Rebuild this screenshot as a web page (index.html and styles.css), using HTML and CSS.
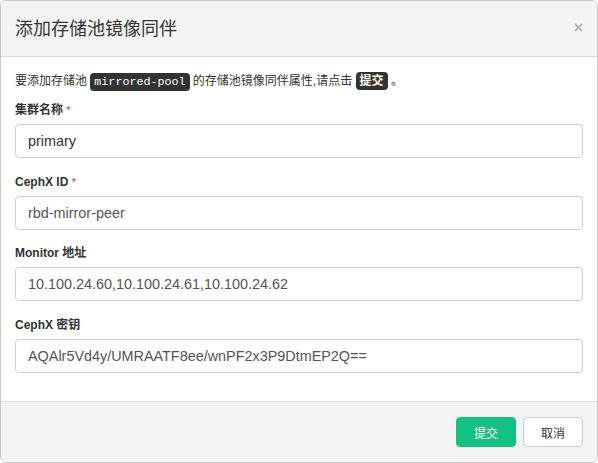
FILE: index.html
```html
<!DOCTYPE html>
<html lang="zh">
<head>
<meta charset="utf-8">
<link rel="stylesheet" href="styles.css">
</head>
<body>
<div class="modal">
  <div class="modal-header">
    <h4 class="modal-title">添加存储池镜像同伴</h4>
    <span class="close">×</span>
  </div>
  <div class="modal-body">
    <p class="intro">要添加存储池 <code>mirrored-pool</code> 的存储池镜像同伴属性,请点击 <kbd>提交</kbd> 。</p>
    <div class="form-group">
      <label>集群名称 <span class="req">*</span></label>
      <div class="input value">primary</div>
    </div>
    <div class="form-group">
      <label>CephX ID <span class="req">*</span></label>
      <div class="input">rbd-mirror-peer</div>
    </div>
    <div class="form-group">
      <label>Monitor 地址</label>
      <div class="input">10.100.24.60,10.100.24.61,10.100.24.62</div>
    </div>
    <div class="form-group">
      <label>CephX 密钥</label>
      <div class="input">AQAlr5Vd4y/UMRAATF8ee/wnPF2x3P9DtmEP2Q==</div>
    </div>
  </div>
  <div class="modal-footer">
    <button class="btn btn-primary">提交</button>
    <button class="btn btn-default">取消</button>
  </div>
</div>
</body>
</html>
```
FILE: styles.css
```css
* { box-sizing: border-box; }
html, body { margin: 0; padding: 0; background: #fff; }
body {
  font-family: "Liberation Sans", "Noto Sans CJK SC", sans-serif;
  font-size: 12px;
  color: #333;
}
.modal {
  width: 598px;
  height: 463px;
  display: flex;
  flex-direction: column;
  border: 1px solid #c8c8c8;
  border-radius: 6px;
  overflow: hidden;
  background: #fff;
}
.modal-header {
  background: #f4f4f4;
  border-bottom: 1px solid #dcdcdc;
  height: 56px;
  flex: none;
  padding: 0 14px;
  display: flex;
  align-items: center;
  justify-content: space-between;
}
.modal-title {
  margin: 0;
  font-size: 18px;
  font-weight: normal;
  color: #333;
  line-height: 26px;
}
.close {
  color: #b5b5b5;
  font-size: 16px;
  font-weight: bold;
  line-height: 1;
  margin-top: -2px;
}
.modal-body {
  flex: 1;
  padding: 15px 14px 0;
}
.intro {
  margin: 0 0 10px;
  line-height: 18px;
}
code, kbd {
  font-family: "Liberation Mono", monospace;
  font-size: 11.7px;
  background: #333;
  color: #fff;
  border-radius: 4px;
  padding: 2px 4px;
}
kbd {
  font-family: "Liberation Sans", "Noto Sans CJK SC", sans-serif;
  font-size: 12px;
  font-weight: bold;
}
.form-group {
  margin-bottom: 14.5px;
}
label {
  display: block;
  font-weight: bold;
  line-height: 18px;
  margin-bottom: 5px;
}
.req { color: #c0392b; font-weight: normal; vertical-align: top; font-size: 11px; }
.input {
  height: 34px;
  border: 1px solid #cfcfcf;
  border-radius: 4px;
  padding: 0 12px;
  font-size: 14.4px;
  line-height: 32px;
  color: #555;
  white-space: nowrap;
}
.input.value { color: #333; }
.modal-footer {
  background: #f4f4f4;
  border-top: 1px solid #dcdcdc;
  height: 61px;
  flex: none;
  padding: 0 14px;
  display: flex;
  align-items: center;
  justify-content: flex-end;
  gap: 7px;
}
.btn {
  height: 30px;
  width: 60px;
  font-family: "Liberation Sans", "Noto Sans CJK SC", sans-serif;
  font-size: 12px;
  border-radius: 4px;
  border: 1px solid #ccc;
  padding: 0;
}
.btn-primary {
  background: #14c082;
  border-color: #14c082;
  color: #fff;
}
.btn-default {
  background: #fff;
  color: #333;
}
```
